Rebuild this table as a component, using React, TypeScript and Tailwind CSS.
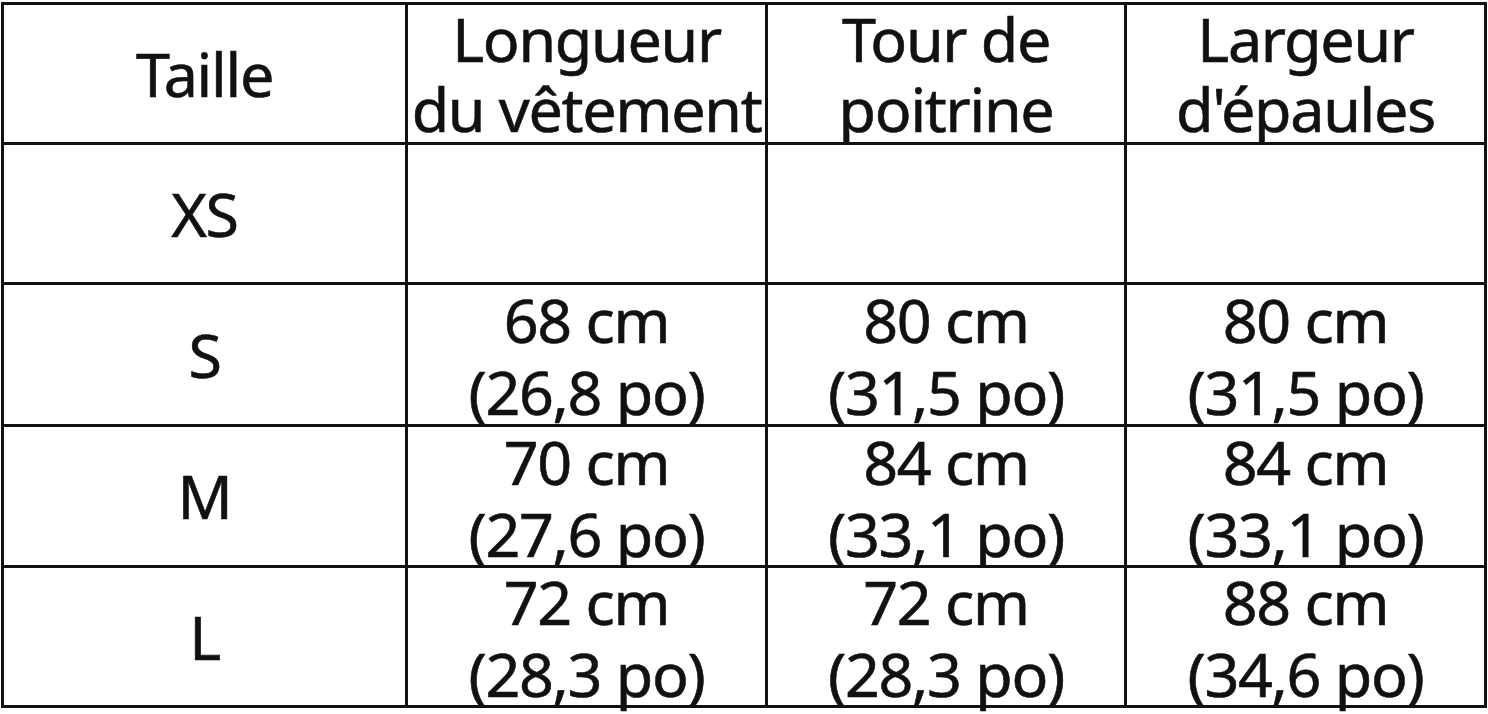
import React from "react";

const rows: { size: string; vals: [string, string][] | null }[] = [
  { size: "XS", vals: null },
  { size: "S", vals: [["68 cm", "(26,8 po)"], ["80 cm", "(31,5 po)"], ["80 cm", "(31,5 po)"]] },
  { size: "M", vals: [["70 cm", "(27,6 po)"], ["84 cm", "(33,1 po)"], ["84 cm", "(33,1 po)"]] },
  { size: "L", vals: [["72 cm", "(28,3 po)"], ["72 cm", "(28,3 po)"], ["88 cm", "(34,6 po)"]] },
];

export default function App() {
  return (
    <div
      className="w-[1488px] h-[714px] bg-white pl-[1px] pt-[2px] text-[#111111] overflow-hidden"
      style={{ fontFamily: '"Noto Sans", "Open Sans", sans-serif' }}
    >
      <div className="inline-grid grid-cols-[401px_357px_356px_357px] grid-rows-[137px_137px_139px_138px_137px] gap-[3px] p-[3px] bg-[#111111] text-[61px] tracking-[-1.3px] [-webkit-text-stroke:0.6px_#111111]">
        <div className="bg-white flex items-center justify-center leading-[70px]">Taille</div>
        <div className="bg-white flex flex-col items-center justify-center leading-[70px] text-center">
          <span>Longueur</span>
          <span className="whitespace-nowrap">du vêtement</span>
        </div>
        <div className="bg-white flex flex-col items-center justify-center leading-[70px] text-center">
          <span>Tour de</span>
          <span>poitrine</span>
        </div>
        <div className="bg-white flex flex-col items-center justify-center leading-[70px] text-center">
          <span>Largeur</span>
          <span>d'épaules</span>
        </div>
        {rows.map((r) => (
          <React.Fragment key={r.size}>
            <div className="bg-white flex items-center justify-center leading-[70px]">{r.size}</div>
            {r.vals
              ? r.vals.map((v, i) => (
                  <div
                    key={i}
                    className="bg-white flex flex-col items-center justify-center leading-[72px] pt-[3px] text-center whitespace-nowrap"
                  >
                    <span>{v[0]}</span>
                    <span>{v[1]}</span>
                  </div>
                ))
              : [0, 1, 2].map((i) => <div key={i} className="bg-white" />)}
          </React.Fragment>
        ))}
      </div>
    </div>
  );
}
